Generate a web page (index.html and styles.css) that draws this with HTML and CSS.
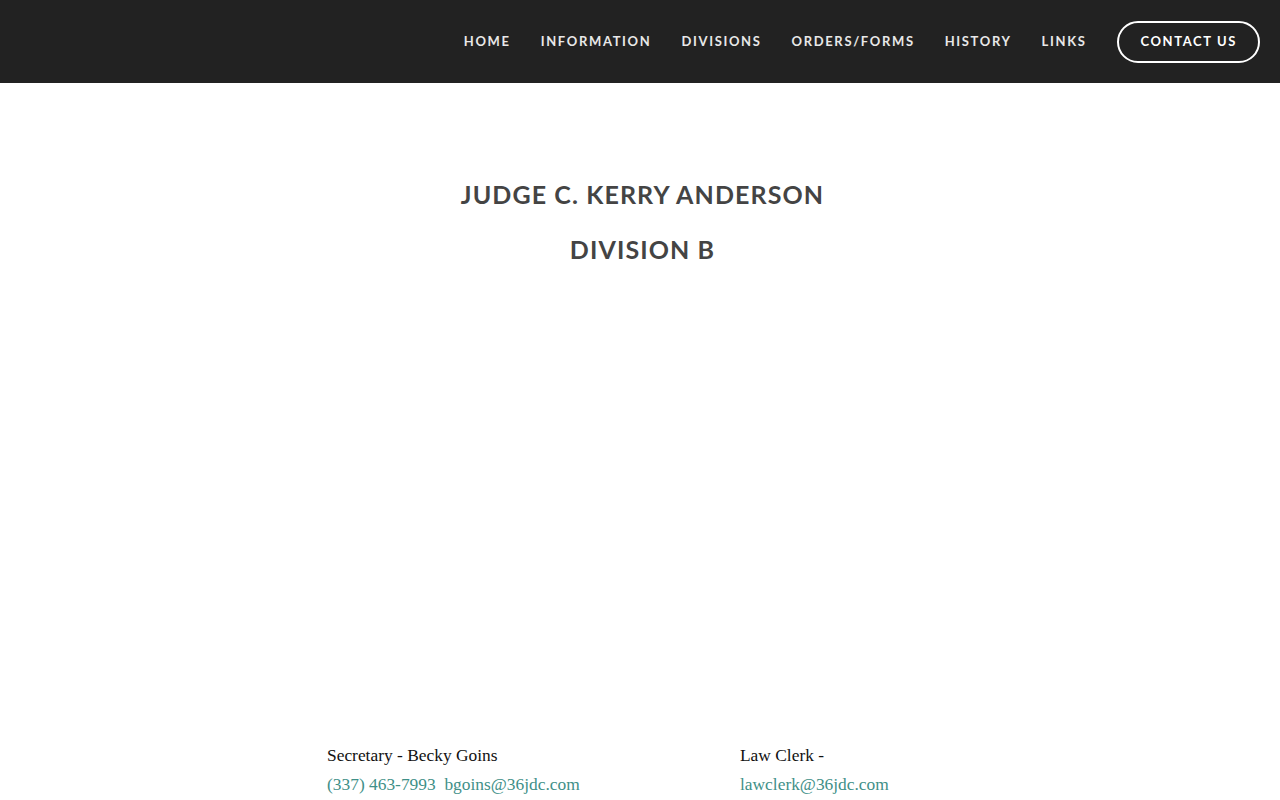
FILE: index.html
```html
<!DOCTYPE html>
<html>
<head>
<meta charset="utf-8">
<link rel="stylesheet" href="styles.css">
</head>
<body>
<header class="topbar">
  <nav class="nav">
    <a class="nav-link" href="#">HOME</a>
    <a class="nav-link" href="#">INFORMATION</a>
    <a class="nav-link" href="#">DIVISIONS</a>
    <a class="nav-link" href="#">ORDERS/FORMS</a>
    <a class="nav-link" href="#">HISTORY</a>
    <a class="nav-link" href="#">LINKS</a>
    <a class="nav-btn" href="#">CONTACT US</a>
  </nav>
</header>
<main class="content">
  <h1 class="title">JUDGE C. KERRY ANDERSON</h1>
  <h2 class="title sub">DIVISION B</h2>
  <div class="spacer"></div>
  <div class="contacts">
    <div class="contact first">
      <p class="role">Secretary - Becky Goins</p>
      <p class="links"><a href="#">(337) 463-7993</a>&nbsp; <a href="#">bgoins@36jdc.com</a></p>
    </div>
    <div class="contact second">
      <p class="role">Law Clerk -</p>
      <p class="links"><a href="#">lawclerk@36jdc.com</a></p>
    </div>
  </div>
</main>
</body>
</html>
```
FILE: styles.css
```css
html, body { margin: 0; padding: 0; background: #fff; }
body { font-family: "Liberation Serif", serif; }
.topbar {
  height: 83px;
  background: #222222;
  display: flex;
  align-items: center;
  justify-content: flex-end;
  padding-right: 20px;
}
.nav { display: flex; align-items: center; }
.nav-link {
  font-family: Lato, "Liberation Sans", sans-serif;
  font-weight: 700;
  font-size: 13px;
  letter-spacing: 1.65px;
  color: #e8e8e8;
  text-decoration: none;
  margin-left: 30px;
  padding-bottom: 2px;
}
.nav-btn {
  font-family: Lato, "Liberation Sans", sans-serif;
  font-weight: 700;
  font-size: 13px;
  letter-spacing: 1.6px;
  color: #fff;
  text-decoration: none;
  margin-left: 30px;
  padding: 0 21px 2px 22px;
  box-sizing: content-box;
  height: 36px;
  display: flex;
  align-items: center;
  border: 2px solid #fff;
  border-radius: 22px;
}
.content { display: flex; flex-direction: column; align-items: center; }
.title {
  font-family: Lato, "Liberation Sans", sans-serif;
  font-weight: 700;
  font-size: 25px;
  letter-spacing: 1.1px;
  color: #444;
  margin: 96px 0 0;
  padding-left: 5px;
  line-height: 30px;
}
.title.sub { margin-top: 25px; }
.spacer { height: 477px; }
.contacts { display: flex; width: 626px; }
.contact.first { flex: 0 0 413px; }
.contact.second { flex: 1 1 auto; }
.contact p { margin: 0; font-size: 17.4px; line-height: 29px; }
.role { color: #111; }
.links a { color: #3f9088; text-decoration: none; }
```
